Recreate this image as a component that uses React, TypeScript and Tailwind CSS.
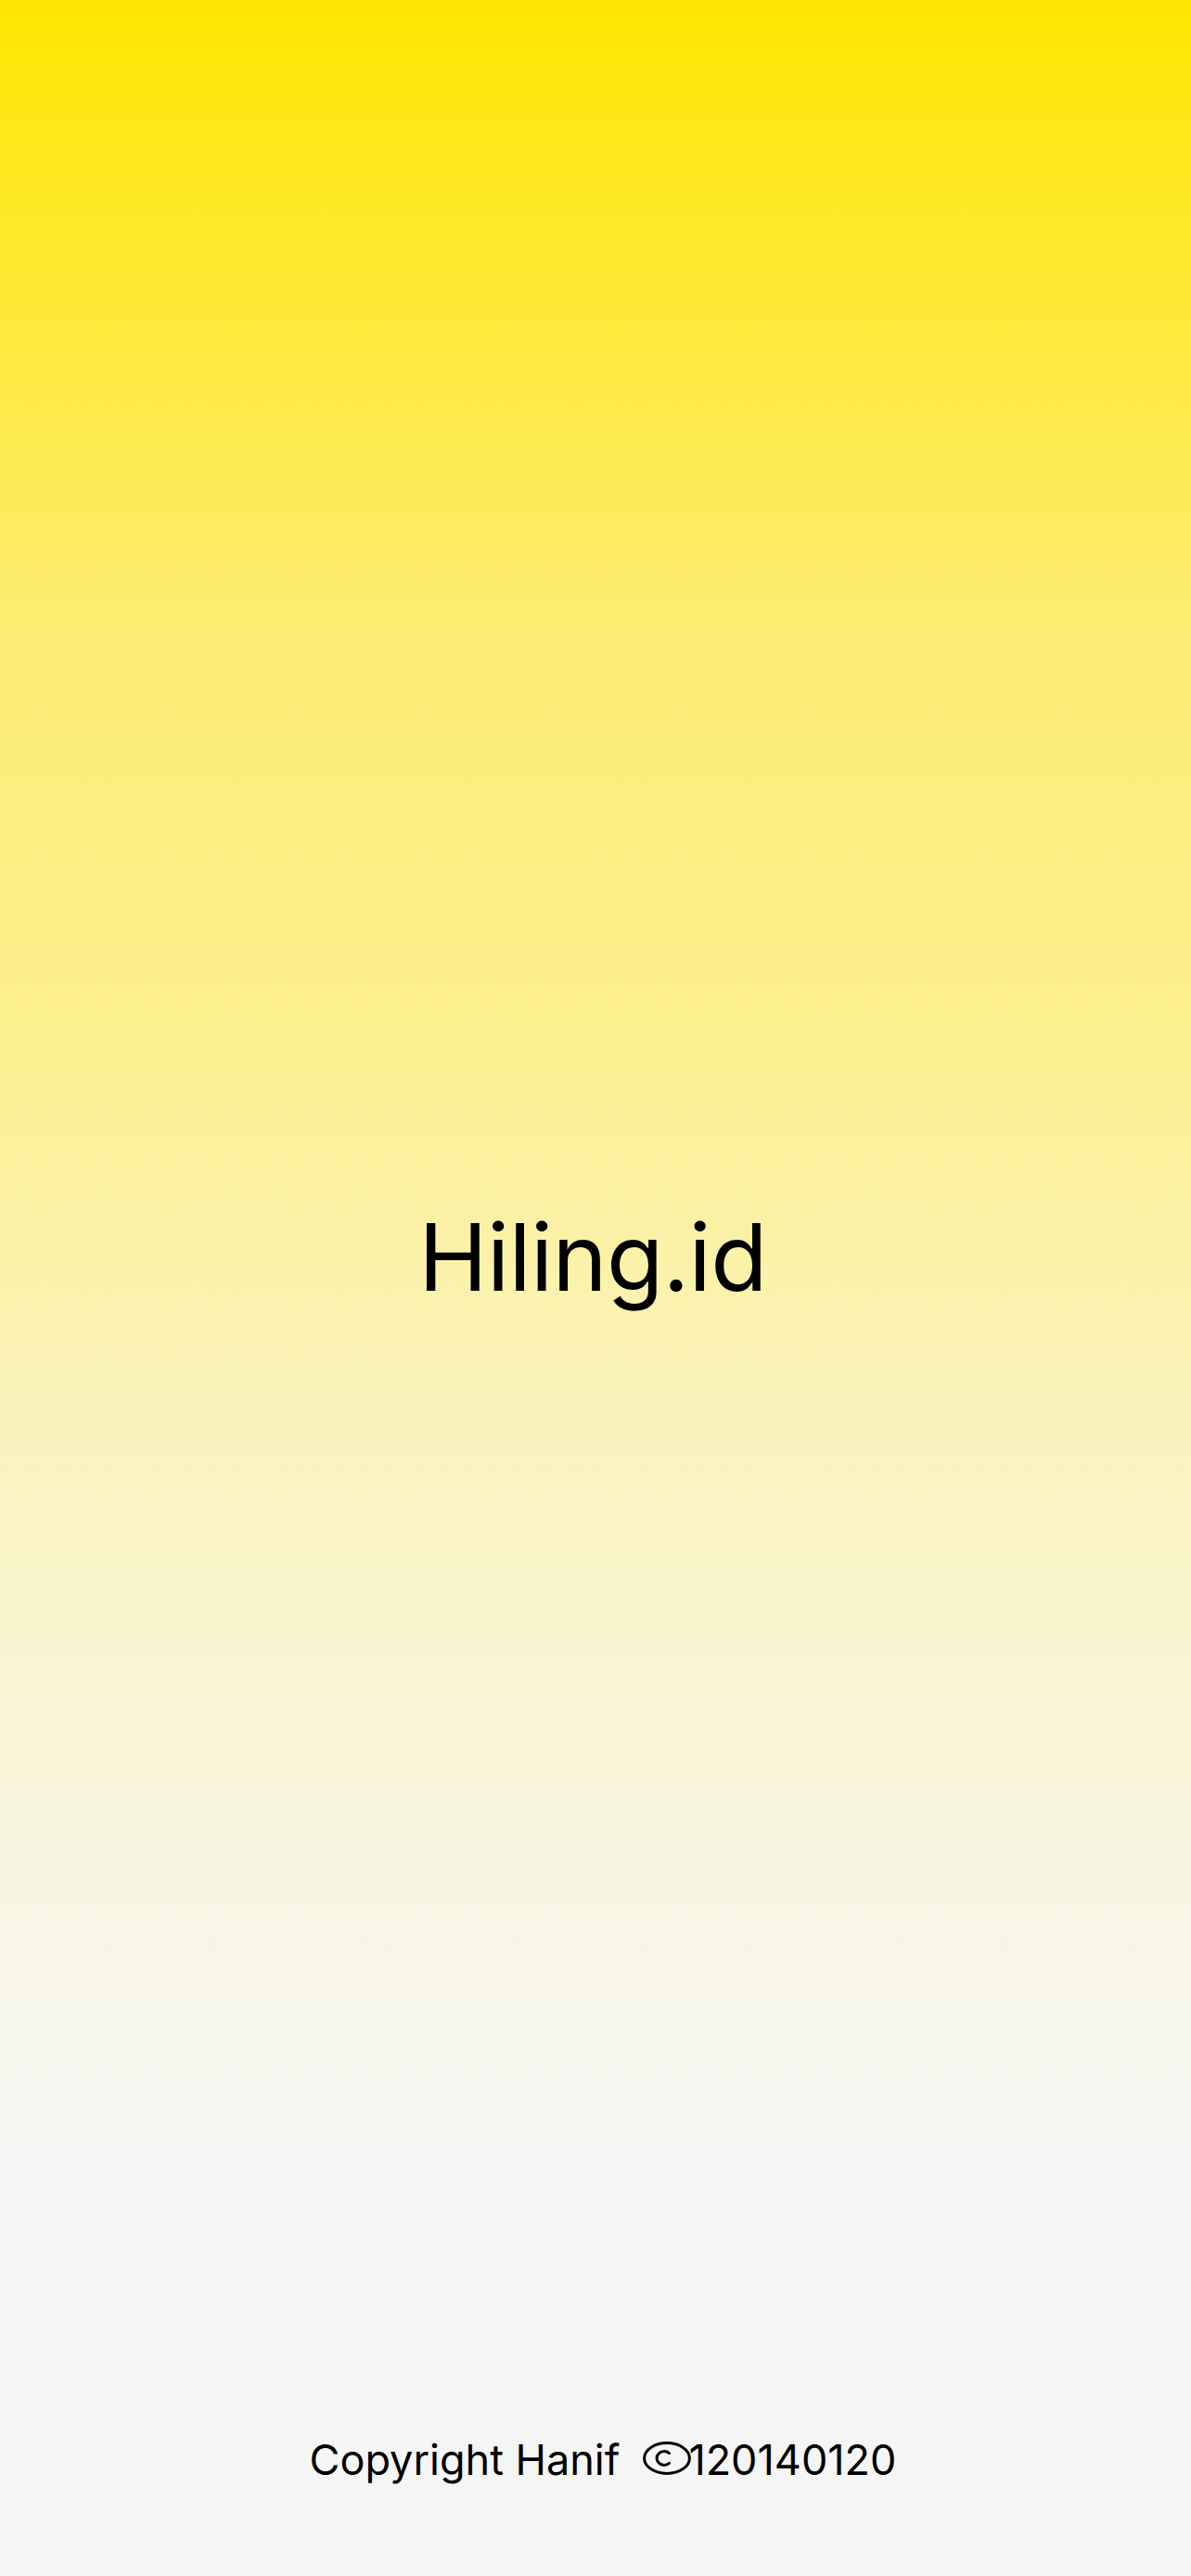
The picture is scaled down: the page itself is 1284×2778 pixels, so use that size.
function CopyrightMark() {
  return (
    <svg width="52" height="36" viewBox="0 0 52 36" fill="none" className="inline-block align-baseline" aria-hidden="true">
      <ellipse cx="26" cy="18" rx="24.4" ry="16.4" stroke="#000" strokeWidth="3" />
      <path d="M28.5 12.6 A8 7.4 0 1 0 28.5 23.4" stroke="#000" strokeWidth="3" strokeLinecap="round" />
    </svg>
  );
}

export default function App() {
  return (
    <div
      className="flex min-h-screen w-full flex-col bg-[linear-gradient(180deg,#ffe600_0%,#fdec70_24%,#fcf08f_40%,#faf3c4_58%,#f8f6e0_72%,#f5f5f4_84%,#f5f5f5_100%)] text-black"
      style={{ fontFamily: 'Inter, "Noto Sans", sans-serif' }}
    >
      <main className="flex flex-1 items-center justify-center pt-[86px] pr-[6px]">
        <h1 className="text-[100px] font-normal leading-[1.21] tracking-[-0.7px]">Hiling.id</h1>
      </main>
      <footer className="flex justify-center pb-[98px] pl-[16px]">
        <p className="text-[45px] leading-[1.21]">
          <span>Copyright Hanif</span>
          <span className="ml-[25px]">
            <CopyrightMark />
          </span>
          <span className="-ml-[3px]">120140120</span>
        </p>
      </footer>
    </div>
  );
}
